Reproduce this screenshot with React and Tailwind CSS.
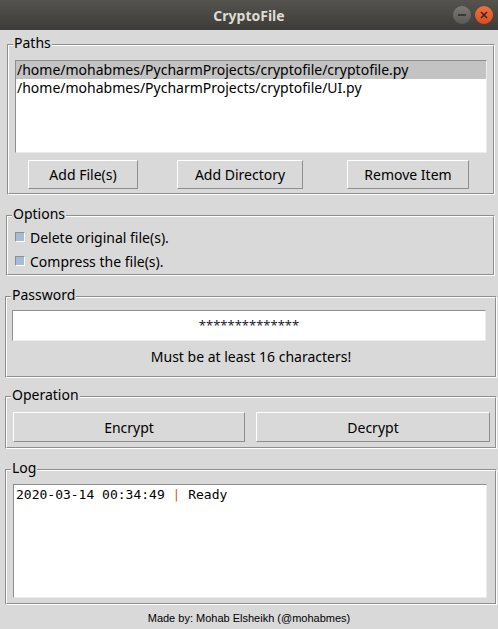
import React from "react";

const ui = { fontFamily: '"Noto Sans", "DejaVu Sans", sans-serif' };

const Frame = ({ label, className, children }) => {
  return (
    <div className={`relative border border-[#8e8e8e] border-r-white border-b-white ${className}`}>
      <div className="border border-white border-r-[#8e8e8e] border-b-[#8e8e8e] h-full">
        {children}
      </div>
      <span className="absolute left-[5px] top-[-11px] bg-[#d9d9d9] px-px text-[14px] leading-[18px] text-black">
        {label}
      </span>
    </div>
  );
};

const TkButton = ({ children, className }) => (
  <button className={`border border-white border-r-[#8e8e8e] border-b-[#8e8e8e] bg-[#d9d9d9] text-[14px] text-black flex items-center justify-center ${className}`}>
    {children}
  </button>
);

const Check = ({ children }) => (
  <div className="flex items-center h-[24px]">
    <span className="ml-[7px] w-[10px] h-[10px] bg-[#a5bcd8] border border-[#8e8e8e] border-r-white border-b-white" />
    <span className="ml-[5px] text-[14px] text-black">{children}</span>
  </div>
);

const App = () => {
  return (
    <div className="w-[498px] h-[629px] bg-[#d9d9d9] flex flex-col overflow-hidden" style={ui}>
      {/* title bar */}
      <div className="h-[30px] shrink-0 bg-gradient-to-b from-[#55534e] to-[#3d3c38] flex items-center justify-center relative">
        <span className="text-[14px] font-bold text-[#dfdbd2]">CryptoFile</span>
        <div className="absolute right-[5px] top-[6px] flex gap-[4px]">
          <span className="w-[18px] h-[18px] rounded-full bg-gradient-to-b from-[#7a7974] to-[#5b5a56] flex items-center justify-center">
            <span className="w-[8px] h-[1.5px] bg-[#3a3936]" />
          </span>
          <span className="w-[18px] h-[18px] rounded-full bg-gradient-to-b from-[#f0703f] to-[#d94e1f] flex items-center justify-center">
            <svg width="8" height="8" viewBox="0 0 8 8">
              <path d="M1 1 L7 7 M7 1 L1 7" stroke="#3b2a22" strokeWidth="1.6" />
            </svg>
          </span>
        </div>
      </div>

      {/* Paths */}
      <Frame label="Paths" className="mt-[14px] ml-[7px] mr-[3px] h-[151px]">
        <div className="mt-[14px] mx-[6px] h-[93px] bg-white border border-[#8e8e8e] border-r-[#ececec] border-b-[#ececec] text-[14px] leading-[18px] text-black">
          <div className="bg-[#c3c3c3] pl-[1px]">/home/mohabmes/PycharmProjects/cryptofile/cryptofile.py</div>
          <div className="pl-[1px]">/home/mohabmes/PycharmProjects/cryptofile/UI.py</div>
        </div>
        <div className="flex mt-[7px]">
          <TkButton className="ml-[19px] w-[110px] h-[29px]">Add File(s)</TkButton>
          <TkButton className="ml-[39px] w-[126px] h-[29px]">Add Directory</TkButton>
          <TkButton className="ml-[44px] w-[122px] h-[29px]">Remove Item</TkButton>
        </div>
      </Frame>

      {/* Options */}
      <Frame label="Options" className="mt-[20px] ml-[6px] mr-[3px] h-[61px]">
        <div className="pt-[8px]">
          <Check>Delete original file(s).</Check>
          <Check>Compress the file(s).</Check>
        </div>
      </Frame>

      {/* Password */}
      <Frame label="Password" className="mt-[20px] ml-[5px] mr-[1px] h-[82px]">
        <div className="mt-[12px] ml-[5px] mr-[9px] h-[31px] bg-white border border-[#8e8e8e] border-r-[#ececec] border-b-[#ececec] flex items-center justify-center text-[13px] text-[#1a1a2e]">
          **************
        </div>
        <div className="mt-[7px] text-center text-[14px] leading-[18px] text-black">
          Must be at least 16 characters!
        </div>
      </Frame>

      {/* Operation */}
      <Frame label="Operation" className="mt-[18px] ml-[5px] mr-[1px] h-[53px]">
        <div className="flex mt-[14px] ml-[6px]">
          <TkButton className="w-[232px] h-[30px]">Encrypt</TkButton>
          <TkButton className="ml-[11px] w-[234px] h-[30px]">Decrypt</TkButton>
        </div>
      </Frame>

      {/* Log */}
      <Frame label="Log" className="mt-[20px] ml-[5px] mr-[1px] h-[136px]">
        <div className="mt-[13px] ml-[6px] mr-[8px] h-[114px] bg-white border border-[#8e8e8e] border-r-[#ececec] border-b-[#ececec] pl-[2px] pt-[1px] text-[13px] leading-[18px] text-black" style={{ fontFamily: '"DejaVu Sans Mono", monospace' }}>
          2020-03-14 00:34:49 <span className="text-[#c0691a]">|</span> Ready
        </div>
      </Frame>

      <div className="text-center text-[11px] mt-[5px] text-black" style={{ fontFamily: '"Liberation Sans", Arial, sans-serif' }}>
        Made by: Mohab Elsheikh (@mohabmes)
      </div>
    </div>
  );
};

export default App;
